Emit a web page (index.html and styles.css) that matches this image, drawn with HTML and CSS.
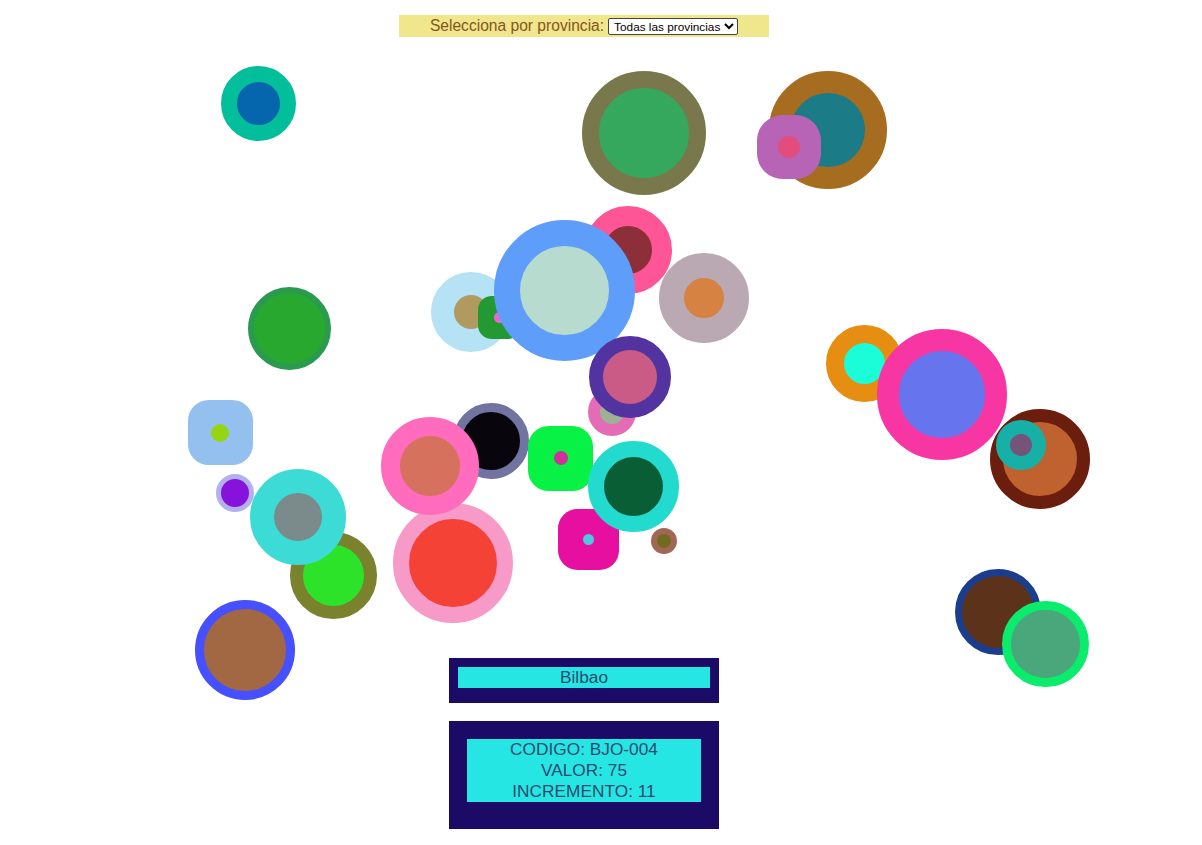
FILE: index.html
```html
<!DOCTYPE html>
<html lang="es">
<head>
<meta charset="utf-8">
<title>Provincias</title>
<link rel="stylesheet" href="styles.css">
</head>
<body>
<div class="stage">
  <div class="filter">
    <label class="filter-label" for="prov">Selecciona por provincia:</label>
    <select id="prov" class="filter-select">
      <option>Todas las provincias</option>
    </select>
  </div>

  <div class="canvas">
    <div class="dot" style="--x:220.5px;--y:28.5px;--d:75px;--b:16px;--o:#03be9a;--i:#0565ad"></div>
    <div class="dot" style="--x:582px;--y:34px;--d:124px;--b:17px;--o:#79784d;--i:#35a85d"></div>
    <div class="dot" style="--x:769px;--y:34px;--d:118px;--b:22px;--o:#a66c1f;--i:#1b7b86"></div>
    <div class="sq sq-round" style="--x:757px;--y:78px;--d:64px;--s:22px;--o:#b864b6;--i:#e24d7e"><span class="pip"></span></div>
    <div class="dot" style="--x:430.5px;--y:235px;--d:80px;--b:23px;--o:#b5e2f5;--i:#b09a5f"></div>
    <div class="sq" style="--x:478px;--y:259px;--d:43px;--s:11px;--o:#229933;--i:#ee66cc"><span class="pip"></span></div>
    <div class="dot" style="--x:584px;--y:169px;--d:88px;--b:20px;--o:#fe5596;--i:#8c2f38"></div>
    <div class="dot" style="--x:493.5px;--y:182.5px;--d:141px;--b:26.5px;--o:#5f9dfa;--i:#b8dbd0"></div>
    <div class="dot" style="--x:658.5px;--y:216px;--d:90px;--b:25.5px;--o:#baa8b3;--i:#d68242"></div>
    <div class="dot" style="--x:247.5px;--y:250px;--d:83px;--b:6px;--o:#2a9a4e;--i:#28a82e"></div>
    <div class="dot" style="--x:588px;--y:351px;--d:48px;--b:12px;--o:#e46cb6;--i:#9cb196"></div>
    <div class="dot" style="--x:588.5px;--y:299.3px;--d:82px;--b:14.5px;--o:#5233a0;--i:#c95b86"></div>
    <div class="dot" style="--x:826px;--y:287.8px;--d:77px;--b:18px;--o:#e68e12;--i:#1bfdd8"></div>
    <div class="dot" style="--x:876.7px;--y:292px;--d:130.6px;--b:22.3px;--o:#f736a3;--i:#6675ee"></div>
    <div class="dot" style="--x:989.5px;--y:371.5px;--d:100px;--b:13.5px;--o:#6b1d0e;--i:#bf6230"></div>
    <div class="dot" style="--x:995.5px;--y:383px;--d:50px;--b:14.5px;--o:#17b0a6;--i:#765479"></div>
    <div class="sq" style="--x:187.5px;--y:363px;--d:65px;--s:18px;--o:#93c0ee;--i:#95d514"><span class="pip"></span></div>
    <div class="dot" style="--x:452.5px;--y:366px;--d:76px;--b:9px;--o:#7173a0;--i:#08060c"></div>
    <div class="dot" style="--x:393px;--y:465.5px;--d:120px;--b:16px;--o:#f79ac7;--i:#f44236"></div>
    <div class="dot" style="--x:381px;--y:380px;--d:98px;--b:19px;--o:#ff6bbd;--i:#d6715e"></div>
    <div class="sq" style="--x:528px;--y:388.5px;--d:65px;--s:14px;--o:#07f244;--i:#cf3199"><span class="pip"></span></div>
    <div class="dot" style="--x:216.3px;--y:437.3px;--d:38px;--b:5.3px;--o:#b3b0f0;--i:#8612db"></div>
    <div class="dot" style="--x:290px;--y:495px;--d:87.4px;--b:13.7px;--o:#7a822e;--i:#2de32a"></div>
    <div class="dot" style="--x:249.5px;--y:431.7px;--d:96px;--b:24px;--o:#3ddbd6;--i:#7b8a8a"></div>
    <div class="sq" style="--x:558px;--y:471.5px;--d:61px;--s:11px;--o:#e60fa0;--i:#4cc8e0"><span class="pip"></span></div>
    <div class="dot" style="--x:587.5px;--y:403.8px;--d:91px;--b:16.5px;--o:#22dbce;--i:#0a5e36"></div>
    <div class="dot" style="--x:650.7px;--y:490.7px;--d:26px;--b:6px;--o:#a26654;--i:#736a22"></div>
    <div class="dot" style="--x:195px;--y:563px;--d:100px;--b:9px;--o:#4650fe;--i:#a26743"></div>
    <div class="dot" style="--x:955px;--y:532px;--d:86px;--b:7.5px;--o:#1a3e8d;--i:#5c331a"></div>
    <div class="dot" style="--x:1002.2px;--y:563.7px;--d:86.6px;--b:9.8px;--o:#0cec6c;--i:#4aa67b"></div>
  </div>

  <div class="panel panel-city">
    <div class="panel-text">Bilbao</div>
  </div>

  <div class="panel panel-info">
    <div class="panel-text">
      <div>CODIGO: BJO-004</div>
      <div>VALOR: 75</div>
      <div>INCREMENTO: 11</div>
    </div>
  </div>
</div>
</body>
</html>
```

FILE: styles.css
```css
html, body {
  margin: 0;
  padding: 0;
  background: #ffffff;
}

body {
  font-family: "Liberation Sans", Arial, sans-serif;
}

.stage {
  width: 1168px;
  display: flex;
  flex-direction: column;
  align-items: center;
}

.filter {
  margin-top: 15px;
  width: 370px;
  height: 22px;
  background: #f0e68c;
  display: flex;
  align-items: center;
  justify-content: center;
  gap: 4px;
}

.filter-label {
  font-size: 15.6px;
  color: #85561f;
  line-height: 22px;
}

.filter-select {
  font-family: "Liberation Sans", Arial, sans-serif;
  font-size: 11.8px;
  height: 17px;
  padding: 0 0 0 1px;
  margin: 0;
  border: 1px solid #444;
  border-radius: 2px;
  background: #fff;
  color: #000;
}

.canvas {
  position: relative;
  width: 1168px;
  height: 621px;
}

.dot {
  position: absolute;
  left: var(--x);
  top: var(--y);
  width: var(--d);
  height: var(--d);
  box-sizing: border-box;
  border: var(--b) solid var(--o);
  background: var(--i);
  border-radius: 50%;
}

.sq {
  position: absolute;
  left: var(--x);
  top: var(--y);
  width: var(--d);
  height: var(--d);
  background: var(--o);
  border-radius: 32%;
  display: flex;
  align-items: center;
  justify-content: center;
}

.sq-round {
  border-radius: 40%;
}

.pip {
  width: var(--s);
  height: var(--s);
  border-radius: 50%;
  background: var(--i);
}

.panel {
  width: 270px;
  box-sizing: border-box;
  background: #1b0a66;
}

.panel-city {
  padding: 9px 9px 15px;
}

.panel-info {
  margin-top: 18px;
  padding: 18px 18px 27px;
}

.panel-text {
  background: #26e6e4;
  color: #2d4a70;
  font-size: 17.3px;
  line-height: 21px;
  text-align: center;
}
```
